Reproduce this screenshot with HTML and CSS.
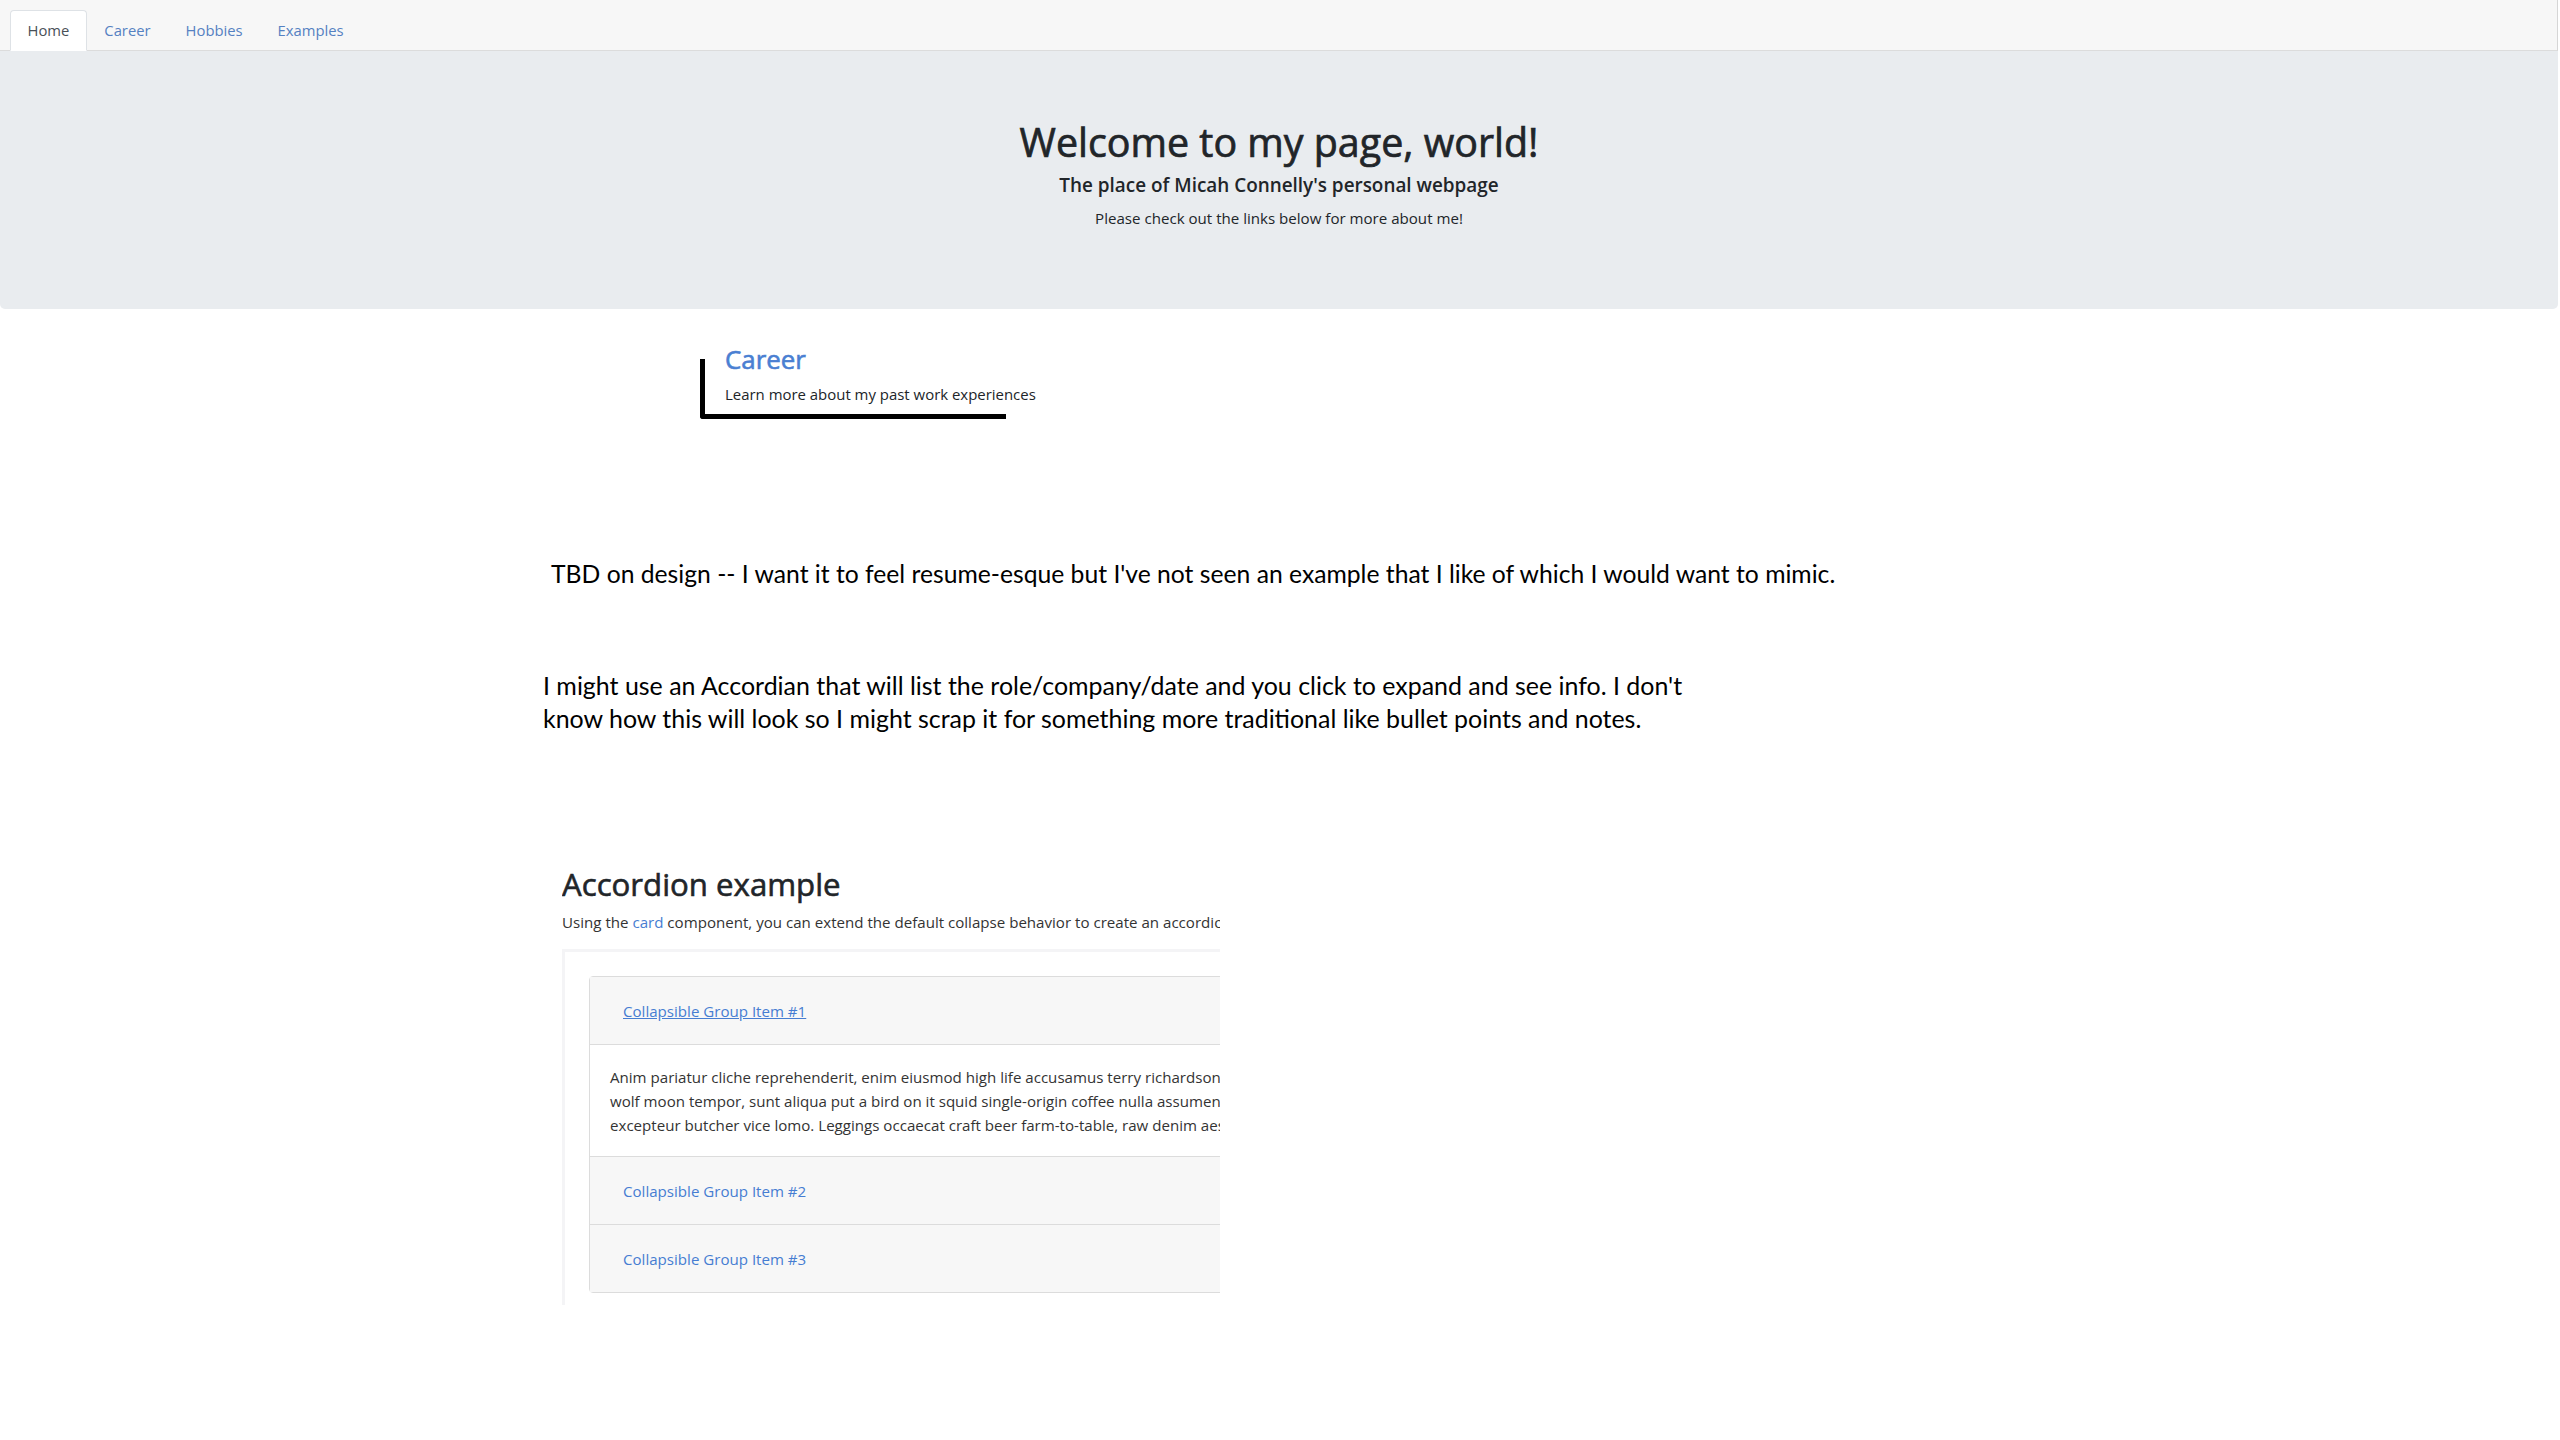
FILE: index.html
```html
<!DOCTYPE html>
<html lang="en">
<head>
<meta charset="utf-8">
<title>Micah Connelly</title>
<link rel="stylesheet" href="styles.css">
</head>
<body>
<div class="page">
  <nav class="tabs">
    <a class="tab active" href="#">Home</a>
    <a class="tab" href="#">Career</a>
    <a class="tab" href="#">Hobbies</a>
    <a class="tab" href="#">Examples</a>
  </nav>
  <header class="jumbo">
    <h1 class="jumbo-title">Welcome to my page, world!</h1>
    <h5 class="jumbo-sub">The place of Micah Connelly's personal webpage</h5>
    <p class="jumbo-text">Please check out the links below for more about me!</p>
  </header>
  <main class="content">
    <section class="career-link">
      <h3 class="career-title">Career</h3>
      <p class="career-text">Learn more about my past work experiences</p>
    </section>
    <p class="tbd">TBD on design -- I want it to feel resume-esque but I've not seen an example that I like of which I would want to mimic.</p>
    <p class="note">I might use an Accordian that will list the role/company/date and you click to expand and see info. I don't<br>know how this will look so I might scrap it for something more traditional like bullet points and notes.</p>
    <div class="shot">
      <h3 class="shot-title">Accordion example</h3>
      <p class="shot-lead">Using the <a href="#">card</a> component, you can extend the default collapse behavior to create an accordion.</p>
      <div class="bd-example">
        <div class="accordion">
          <div class="acc-header"><a class="acc-link current" href="#">Collapsible Group Item #1</a></div>
          <div class="acc-body">
            <span class="acc-line">Anim pariatur cliche reprehenderit, enim eiusmod high life accusamus terry richardson ad squid. 3 wolf moon officia aute, non cupidatat skateboard dolor brunch. Food truck quinoa nesciunt laborum eiusmod. Brunch 3</span>
            <span class="acc-line">wolf moon tempor, sunt aliqua put a bird on it squid single-origin coffee nulla assumenda shoreditch et. Nihil anim keffiyeh helvetica, craft beer labore wes anderson cred nesciunt sapiente ea proident. Ad vegan</span>
            <span class="acc-line">excepteur butcher vice lomo. Leggings occaecat craft beer farm-to-table, raw denim aesthetic synth nesciunt you probably haven't heard of them accusamus labore sustainable VHS.</span>
          </div>
          <div class="acc-header"><a class="acc-link" href="#">Collapsible Group Item #2</a></div>
          <div class="acc-header"><a class="acc-link" href="#">Collapsible Group Item #3</a></div>
        </div>
      </div>
    </div>
  </main>
</div>
</body>
</html>
```

FILE: styles.css
```css
* { box-sizing: border-box; }
html, body { margin: 0; padding: 0; background: #fff; }
body { font-family: "Open Sans", "Noto Sans", sans-serif; color: #212529; }
a { text-decoration: none; }

.page { width: 2558px; }

.tabs {
  display: flex;
  height: 51px;
  padding: 10px 0 0 10px;
  background: #f7f7f7;
  border-bottom: 1px solid #dcdcdc;
  border-right: 1px solid #d6d6d6;
}
.tab {
  display: block;
  height: 41px;
  margin-bottom: -1px;
  padding: 0 16.5px;
  line-height: 39px;
  font-size: 14.8px;
  color: #5581c2;
  border: 1px solid transparent;
  border-radius: 4px 4px 0 0;
}
.tab.active {
  background: #fff;
  color: #495057;
  border-color: #dee2e6 #dee2e6 #fff;
}

.jumbo {
  height: 258px;
  padding-top: 68px;
  background: #e9ecef;
  border-radius: 0 0 5px 5px;
  text-align: center;
}
.jumbo-title { margin: 0; font-size: 39.4px; line-height: 46px; font-weight: 400; -webkit-text-stroke: 0.7px currentColor; }
.jumbo-sub { margin: 9px 0 0; font-size: 18.9px; line-height: 23px; font-weight: 600; }
.jumbo-text { margin: 10px 0 0; font-size: 15.1px; line-height: 22px; }

.content { display: flex; flex-direction: column; align-items: flex-start; }

.career-link {
  display: flex;
  flex-direction: column;
  width: 306px;
  height: 60px;
  margin: 50px 0 0 700px;
  padding-left: 20px;
  border-left: 5px solid #000;
  border-bottom: 5px solid #000;
  border-bottom-left-radius: 3px;
}
.career-title { margin: -15px 0 0; font-size: 25.9px; line-height: 30px; font-weight: 400; -webkit-text-stroke: 0.6px currentColor; color: #4a7fd2; white-space: nowrap; }
.career-text { margin: 10px 0 0; font-size: 14.95px; line-height: 20px; color: #212529; white-space: nowrap; }

.tbd, .note { font-family: Lato, "Open Sans", sans-serif; color: #000; white-space: nowrap; }
.tbd { margin: 140px 0 0 551px; font-size: 24.7px; line-height: 30px; }
.note { margin: 80px 0 0 543px; font-size: 24.95px; line-height: 33px; }

.shot {
  width: 658px;
  height: 439px;
  margin: 130.5px 0 0 562px;
  overflow: hidden;
}
.shot-title { margin: 0; font-size: 31.2px; line-height: 36px; font-weight: 400; -webkit-text-stroke: 0.6px currentColor; color: #212529; white-space: nowrap; }
.shot-lead { margin: 9px 0 0; font-size: 15.1px; line-height: 22px; color: #333; white-space: nowrap; }
.shot-lead a { color: #467dd2; }

.bd-example {
  width: 1200px;
  margin-top: 16.5px;
  padding: 24px;
  border-top: 3px solid #f4f4f6;
  border-left: 3px solid #f4f4f6;
}
.accordion {
  border: 1px solid #dcdcdc;
  border-radius: 4px;
}
.acc-header {
  display: flex;
  align-items: center;
  height: 68px;
  padding-left: 33px;
  background: #f7f7f7;
  border-bottom: 1px solid #dcdcdc;
}
.accordion .acc-header:last-child { border-bottom: 0; height: 67px; }
.acc-link { font-size: 15.1px; color: #467dd2; }
.acc-link.current { text-decoration: underline; }
.acc-body {
  display: flex;
  flex-direction: column;
  height: 112px;
  padding: 20px;
  border-bottom: 1px solid #dcdcdc;
  font-size: 15.1px;
  line-height: 24px;
  color: #333;
}
.acc-line { white-space: nowrap; }
```
